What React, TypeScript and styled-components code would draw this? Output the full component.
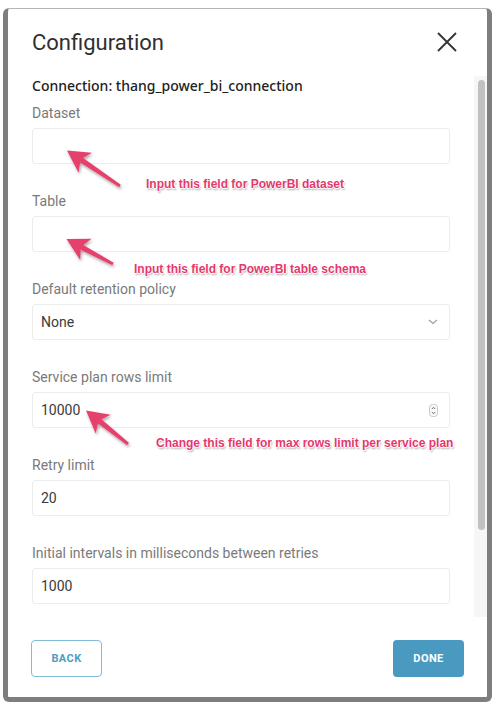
import React from "react";
import styled, { createGlobalStyle } from "styled-components";

const Global = createGlobalStyle`
  html, body { margin: 0; padding: 0; background: #ffffff; }
  body { font-family: Roboto, "Liberation Sans", sans-serif; }
  * { box-sizing: border-box; }
`;

const Page = styled.div`
  position: relative;
  width: 500px;
  height: 712px;
  background: #ffffff;
  padding: 8px 0 0 3px;
  overflow: hidden;
`;

const Panel = styled.div`
  width: 489px;
  height: 694px;
  background: #ffffff;
  border: 5px solid #7e7e7e;
  border-top: 1px solid #b4b4b4;
  border-radius: 6px;
  display: flex;
  flex-direction: column;
  overflow: hidden;
`;

const Header = styled.div`
  height: 67px;
  flex: none;
  display: flex;
  justify-content: space-between;
  align-items: flex-start;
  padding: 20px 30px 0 24px;
`;

const Title = styled.h1`
  margin: 0;
  font-family: Roboto, sans-serif;
  font-weight: 400;
  font-size: 22px;
  line-height: 28px;
  color: #2f2f2f;
`;

const CloseButton = styled.button`
  width: 20px;
  height: 20px;
  margin-top: 3px;
  padding: 0;
  border: none;
  background: transparent;
  display: flex;
  cursor: pointer;
`;

const Body = styled.div`
  height: 541px;
  flex: none;
  display: flex;
  overflow: hidden;
`;

const Content = styled.div`
  flex: 1;
  padding: 0 24px 0 24px;
`;

const ScrollTrack = styled.div`
  width: 13px;
  flex: none;
  background: #f6f6f6;
  padding: 4px 2px 0 4px;
`;

const ScrollThumb = styled.div`
  height: 450px;
  border-radius: 4px;
  background: #c1c1c1;
`;

const Connection = styled.div`
  font-family: "Noto Sans", Roboto, sans-serif;
  font-weight: 500;
  font-size: 14px;
  line-height: 20px;
  color: #222;
  margin-bottom: 7px;
`;

const Field = styled.div`
  display: flex;
  flex-direction: column;
  margin-bottom: 27px;
`;

const Label = styled.label`
  font-family: Roboto, sans-serif;
  font-size: 14px;
  line-height: 20px;
  color: #7a7a7a;
  margin-bottom: 5px;
`;

const Box = styled.div`
  height: 36px;
  border: 1px solid #ececec;
  border-radius: 3px;
  background: #fff;
  display: flex;
  align-items: center;
  justify-content: space-between;
  padding: 0 11px 0 8px;
  font-family: Roboto, sans-serif;
  font-size: 14px;
  color: #3a3a3a;
`;

const Footer = styled.div`
  flex: 1;
  display: flex;
  justify-content: space-between;
  align-items: flex-start;
  padding: 23px 23px 0 23px;
`;

const Button = styled.button<{ $primary?: boolean }>`
  width: 71px;
  height: 37px;
  padding: 0;
  border-radius: 4px;
  font-family: Roboto, sans-serif;
  font-weight: 700;
  font-size: 11px;
  line-height: 13px;
  letter-spacing: 0.4px;
  cursor: pointer;
  border: ${(p) => (p.$primary ? "none" : "1.5px solid #7fbdd8")};
  background: ${(p) => (p.$primary ? "#4a99c1" : "#ffffff")};
  color: ${(p) => (p.$primary ? "#ffffff" : "#4d9dc4")};
`;

const Overlay = styled.svg`
  position: absolute;
  left: 0;
  top: 0;
  width: 500px;
  height: 712px;
  pointer-events: none;
`;

const Note = styled.span<{ $x: number; $y: number }>`
  position: absolute;
  left: ${(p) => p.$x}px;
  top: ${(p) => p.$y}px;
  font-family: "Liberation Sans", Arial, sans-serif;
  font-weight: 700;
  font-size: 12px;
  line-height: 15px;
  white-space: nowrap;
  color: #e5386d;
  text-shadow: -1px 0 0 #fff, 1px 0 0 #fff, 0 -1px 0 #fff, 0 1px 0 #fff,
    1px 2px 2px rgba(0, 0, 0, 0.35);
`;

type Pt = [number, number];

function arrowPoints(tip: Pt, tail: Pt, headLen = 22, headHalf = 12, w1 = 5.5, w2 = 3) {
  const dx = tail[0] - tip[0];
  const dy = tail[1] - tip[1];
  const L = Math.hypot(dx, dy);
  const ux = dx / L, uy = dy / L;
  const px = -uy, py = ux;
  const bx = tip[0] + ux * headLen, by = tip[1] + uy * headLen;
  const jx = tip[0] + ux * headLen * 0.8, jy = tip[1] + uy * headLen * 0.8;
  const pts: Pt[] = [
    tip,
    [bx + px * headHalf, by + py * headHalf],
    [jx + px * w1 / 2, jy + py * w1 / 2],
    [tail[0] + px * w2 / 2, tail[1] + py * w2 / 2],
    [tail[0] - px * w2 / 2, tail[1] - py * w2 / 2],
    [jx - px * w1 / 2, jy - py * w1 / 2],
    [bx - px * headHalf, by - py * headHalf],
  ];
  return pts.map((p) => `${p[0].toFixed(1)},${p[1].toFixed(1)}`).join(" ");
}

const arrows: { tip: Pt; tail: Pt }[] = [
  { tip: [67, 150.5], tail: [120, 186] },
  { tip: [66.5, 239], tail: [113, 264] },
  { tip: [86, 410.5], tail: [128, 444] },
];

const notes = [
  { x: 146, y: 177, text: "Input this field for PowerBI dataset" },
  { x: 134, y: 262, text: "Input this field for PowerBI table schema" },
  { x: 156, y: 436, text: "Change this field for max rows limit per service plan" },
];

const CloseIcon = () => (
  <svg width="20" height="20" viewBox="0 0 20 20">
    <path d="M1 1 L19 19 M19 1 L1 19" stroke="#333" strokeWidth="1.8" fill="none" />
  </svg>
);

const Chevron = () => (
  <svg width="10" height="6" viewBox="0 0 10 6">
    <path d="M1 1 L5 4.5 L9 1" stroke="#9a9a9a" strokeWidth="1.1" fill="none" />
  </svg>
);

const Spinner = () => (
  <svg width="9" height="13" viewBox="0 0 9 13">
    <rect x="0.5" y="0.5" width="8" height="12" rx="3" fill="#fafafa" stroke="#c8c8c8" />
    <path d="M2.8 5 L4.5 3.3 L6.2 5" stroke="#555" strokeWidth="0.9" fill="none" />
    <path d="M2.8 8 L4.5 9.7 L6.2 8" stroke="#555" strokeWidth="0.9" fill="none" />
  </svg>
);

const fields: { label: string; value?: string; kind?: "select" | "number" }[] = [
  { label: "Dataset" },
  { label: "Table" },
  { label: "Default retention policy", value: "None", kind: "select" },
  { label: "Service plan rows limit", value: "10000", kind: "number" },
  { label: "Retry limit", value: "20" },
  { label: "Initial intervals in milliseconds between retries", value: "1000" },
];

export default function App() {
  return (
    <Page>
      <Global />
      <Panel>
        <Header>
          <Title>Configuration</Title>
          <CloseButton aria-label="Close">
            <CloseIcon />
          </CloseButton>
        </Header>
        <Body>
          <Content>
            <Connection>Connection: thang_power_bi_connection</Connection>
            {fields.map((f) => (
              <Field key={f.label}>
                <Label>{f.label}</Label>
                <Box>
                  <span>{f.value ?? ""}</span>
                  {f.kind === "select" && <Chevron />}
                  {f.kind === "number" && <Spinner />}
                </Box>
              </Field>
            ))}
          </Content>
          <ScrollTrack>
            <ScrollThumb />
          </ScrollTrack>
        </Body>
        <Footer>
          <Button>BACK</Button>
          <Button $primary>DONE</Button>
        </Footer>
      </Panel>
      <Overlay viewBox="0 0 500 712">
        <defs>
          <filter id="shadow" x="-20%" y="-20%" width="140%" height="140%">
            <feDropShadow dx="1" dy="2" stdDeviation="1.5" floodColor="#000" floodOpacity="0.35" />
          </filter>
        </defs>
        {arrows.map((a, i) => (
          <polygon key={i} points={arrowPoints(a.tip, a.tail)} fill="#e6416d" filter="url(#shadow)" />
        ))}
      </Overlay>
      {notes.map((n) => (
        <Note key={n.text} $x={n.x} $y={n.y}>
          {n.text}
        </Note>
      ))}
    </Page>
  );
}
